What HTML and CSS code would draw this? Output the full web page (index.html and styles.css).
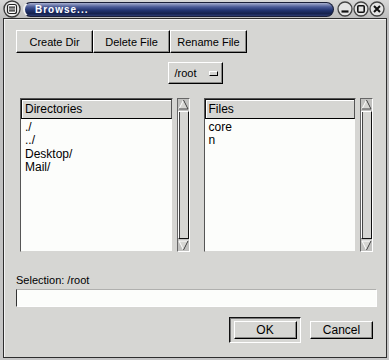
FILE: index.html
```html
<!DOCTYPE html>
<html lang="en">
<head>
  <meta charset="UTF-8">
  <meta name="viewport" content="width=device-width, initial-scale=1.0">
  <title>Browse...</title>
  <link rel="stylesheet" href="styles.css">
</head>
<body>
  <div class="window">
    <div class="titlebar">
      <span class="tb-btn tb-menu">
        <svg width="18" height="18" viewBox="0 0 18 18">
          <circle cx="9" cy="9" r="8" fill="#e8e8e8" stroke="#3a3a3a" stroke-width="1.4"/>
          <rect x="4.5" y="4.5" width="9" height="9" rx="2" fill="#fff" stroke="#222" stroke-width="1.2"/>
          <path d="M6 7.2h6M6 9h6M6 10.8h6" stroke="#222" stroke-width="1.2"/>
        </svg>
      </span>
      <div class="title-pill"><span class="title">Browse...</span></div>
      <span class="tb-btn">
        <svg width="16" height="16" viewBox="0 0 16 16">
          <circle cx="8" cy="8" r="7" fill="#e4e4e4" stroke="#444" stroke-width="1.3"/>
          <path d="M4.5 10.5h7" stroke="#111" stroke-width="2.2"/>
        </svg>
      </span>
      <span class="tb-btn">
        <svg width="16" height="16" viewBox="0 0 16 16">
          <circle cx="8" cy="8" r="7" fill="#e4e4e4" stroke="#444" stroke-width="1.3"/>
          <rect x="4.8" y="4.8" width="6.4" height="6.4" rx="1" fill="none" stroke="#111" stroke-width="1.6"/>
        </svg>
      </span>
      <span class="tb-btn">
        <svg width="16" height="16" viewBox="0 0 16 16">
          <circle cx="8" cy="8" r="7" fill="#e4e4e4" stroke="#444" stroke-width="1.3"/>
          <path d="M5 5l6 6M11 5l-6 6" stroke="#111" stroke-width="2"/>
        </svg>
      </span>
    </div>

    <div class="frame">
      <div class="actions">
        <button class="btn btn-action">Create Dir</button>
        <button class="btn btn-action">Delete File</button>
        <button class="btn btn-action">Rename File</button>
      </div>

      <div class="history">
        <button class="btn option-menu">/root <span class="indicator"></span></button>
      </div>

      <div class="lists">
        <div class="list-group">
          <div class="clist">
            <div class="col-title">Directories</div>
            <ul class="rows">
              <li>./</li>
              <li>../</li>
              <li>Desktop/</li>
              <li>Mail/</li>
            </ul>
          </div>
          <div class="scrollbar">
            <svg class="arrow" width="11" height="11" viewBox="0 0 11 11">
              <path d="M5.5 1L1 10h9z" fill="#d6d6d3" stroke="#fff" stroke-width="1"/>
              <path d="M5.5 1L10 10H1" fill="none" stroke="#333" stroke-width="1"/>
            </svg>
            <div class="slider"></div>
            <svg class="arrow" width="11" height="11" viewBox="0 0 11 11">
              <path d="M1 1h9L5.5 10z" fill="#d6d6d3" stroke="#fff" stroke-width="1"/>
              <path d="M10 1L5.5 10" fill="none" stroke="#333" stroke-width="1"/>
            </svg>
          </div>
        </div>

        <div class="list-group">
          <div class="clist">
            <div class="col-title">Files</div>
            <ul class="rows">
              <li>core</li>
              <li>n</li>
            </ul>
          </div>
          <div class="scrollbar">
            <svg class="arrow" width="11" height="11" viewBox="0 0 11 11">
              <path d="M5.5 1L1 10h9z" fill="#d6d6d3" stroke="#fff" stroke-width="1"/>
              <path d="M5.5 1L10 10H1" fill="none" stroke="#333" stroke-width="1"/>
            </svg>
            <div class="slider"></div>
            <svg class="arrow" width="11" height="11" viewBox="0 0 11 11">
              <path d="M1 1h9L5.5 10z" fill="#d6d6d3" stroke="#fff" stroke-width="1"/>
              <path d="M10 1L5.5 10" fill="none" stroke="#333" stroke-width="1"/>
            </svg>
          </div>
        </div>
      </div>

      <label class="sel-label" for="selection">Selection: /root</label>
      <input class="sel-entry" type="text" id="selection">

      <div class="dialog-actions">
        <div class="default-frame">
          <button class="btn btn-dialog">OK</button>
        </div>
        <button class="btn btn-dialog">Cancel</button>
      </div>
    </div>
  </div>
</body>
</html>
```

FILE: styles.css
```css
* {
  box-sizing: border-box;
}

body {
  margin: 0;
  background: #c8c8c8;
  font-family: "Liberation Sans", Arial, sans-serif;
  font-size: 11px;
  color: #000;
}

.window {
  width: 389px;
  height: 360px;
  display: flex;
  flex-direction: column;
  background: linear-gradient(#d8d8d8, #bdbdbd 18px, #c6c6c6);
}

/* title bar */

.titlebar {
  height: 18px;
  display: flex;
  align-items: center;
  padding: 0 4px 0 3px;
}

.tb-btn {
  display: flex;
  width: 16px;
  height: 16px;
}

.tb-btn.tb-menu {
  width: 18px;
  height: 18px;
}

.title-pill {
  flex: 1;
  height: 15px;
  margin: 0 3px 0 2px;
  border-radius: 8px;
  border: 1px solid #1a1f38;
  border-left: 2px solid #f0f0f0;
  background: linear-gradient(#a8b0d0, #4a5a96 30%, #233572 55%, #15224f 80%, #2c3a70);
  display: flex;
  align-items: center;
  padding-left: 10px;
}

.title {
  color: #fff;
  font-weight: bold;
  font-size: 10px;
  letter-spacing: 1px;
}

/* client area */

.frame {
  flex: 1;
  margin: 0 2px 2px 3px;
  border: 1px solid #2e2e2e;
  background: #d6d6d3;
  box-shadow: inset 1px 1px 0 #f2f2f2;
  display: flex;
  flex-direction: column;
}

.btn {
  font-family: inherit;
  font-size: 11px;
  color: #000;
  background: #d6d6d3;
  border: 1px solid;
  border-color: #fff #000 #000 #fff;
  box-shadow: inset -1px -1px 0 #8a8a88;
  padding: 0;
  margin: 0;
}

.actions {
  display: flex;
  margin: 11px 0 0 12px;
}

.btn-action {
  height: 23px;
  width: 77px;
}

.history {
  display: flex;
  justify-content: center;
  margin-top: 9px;
}

.option-menu {
  width: 55px;
  height: 22px;
  display: flex;
  align-items: center;
  padding-left: 6px;
  gap: 12px;
}

.indicator {
  width: 9px;
  height: 5px;
  border: 1px solid;
  border-color: #fff #000 #000 #fff;
}

/* lists */

.lists {
  display: flex;
  gap: 14px;
  height: 154px;
  margin-top: 14px;
  padding: 0 13px 0 16px;
}

.list-group {
  flex: 1;
  display: flex;
  gap: 4px;
}

.clist {
  flex: 1;
  display: flex;
  flex-direction: column;
  background: #fcfdfb;
  border: 1px solid;
  border-color: #555 #d6d6d3 #d6d6d3 #555;
}

.col-title {
  height: 20px;
  line-height: 18px;
  padding-left: 3px;
  font-size: 12px;
  background: #d6d6d3;
  border: 1px solid;
  border-color: #111 #555 #000 #111;
  box-shadow: inset 1px 1px 0 #fff;
}

.rows {
  list-style: none;
  margin: 0;
  padding: 2px 0 0 4px;
  font-size: 12px;
}

.rows li {
  height: 13.3px;
  line-height: 13px;
}

.scrollbar {
  width: 13px;
  display: flex;
  flex-direction: column;
  align-items: center;
  background: #c2c2c0;
  border: 1px solid;
  border-color: #666 #fff #fff #666;
}

.arrow {
  flex: none;
}

.slider {
  flex: 1;
  width: 11px;
  margin: 1px 0;
  background: #d6d6d3;
  border: 1px solid;
  border-color: #fff #111 #111 #fff;
  box-shadow: inset 1px 0 0 #444;
}

/* selection */

.sel-label {
  margin: 21px 0 0 12px;
  height: 14px;
  line-height: 14px;
}

.sel-entry {
  height: 18px;
  margin: 2px 9px 0 12px;
  background: #fcfdfb;
  border: 1px solid;
  border-color: #b0b0ae #fff #fff #333;
  outline: none;
}

.dialog-actions {
  display: flex;
  justify-content: flex-end;
  align-items: center;
  gap: 9px;
  margin-top: 10px;
  padding-right: 13px;
}

.default-frame {
  width: 72px;
  height: 26px;
  display: flex;
  align-items: center;
  justify-content: center;
  border: 1px solid;
  border-color: #111 #fff #fff #111;
  box-shadow: inset 1px 1px 0 #777;
}

.btn-dialog {
  width: 63px;
  height: 18px;
  font-size: 12px;
}
```
